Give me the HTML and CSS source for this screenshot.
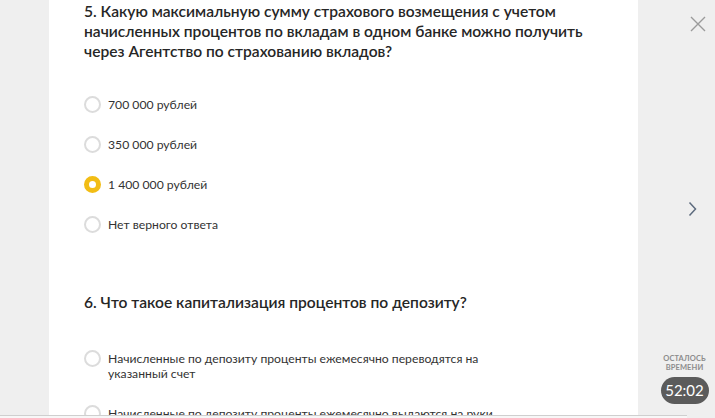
FILE: index.html
```html
<!DOCTYPE html>
<html lang="ru">
<head>
<meta charset="utf-8">
<title>Тест</title>
<link rel="stylesheet" href="styles.css">
</head>
<body>
<div class="page">
  <aside class="left-bar"></aside>
  <main class="panel">
    <section class="question">
      <h2 class="q-title">5. Какую максимальную сумму страхового возмещения с учетом начисленных процентов по вкладам в одном банке можно получить через Агентство по страхованию вкладов?</h2>
      <ul class="options">
        <li class="option"><span class="radio"></span><span class="opt-text">700 000 рублей</span></li>
        <li class="option"><span class="radio"></span><span class="opt-text">350 000 рублей</span></li>
        <li class="option"><span class="radio radio-checked"></span><span class="opt-text">1 400 000 рублей</span></li>
        <li class="option"><span class="radio"></span><span class="opt-text">Нет верного ответа</span></li>
      </ul>
    </section>
    <section class="question question-next">
      <h2 class="q-title">6. Что такое капитализация процентов по депозиту?</h2>
      <ul class="options options-spaced">
        <li class="option"><span class="radio"></span><span class="opt-text">Начисленные по депозиту проценты ежемесячно переводятся на указанный счет</span></li>
        <li class="option"><span class="radio"></span><span class="opt-text">Начисленные по депозиту проценты ежемесячно выдаются на руки</span></li>
      </ul>
    </section>
  </main>
  <aside class="right-bar">
    <button class="close-btn" aria-label="Закрыть">
      <svg width="16" height="16" viewBox="0 0 16 16"><path d="M1 1 L15 15 M15 1 L1 15" stroke="#9b9b9b" stroke-width="1.4" fill="none"/></svg>
    </button>
    <button class="next-btn" aria-label="Далее">
      <svg width="9" height="16" viewBox="0 0 9 16"><path d="M1.5 1.5 L7.5 8 L1.5 14.5" stroke="#5d6b7e" stroke-width="1.5" fill="none"/></svg>
    </button>
    <div class="timer">
      <div class="timer-label">ОСТАЛОСЬ<br>ВРЕМЕНИ</div>
      <div class="timer-badge">52:02</div>
    </div>
  </aside>
  <div class="hscroll"></div>
</div>
</body>
</html>
```

FILE: styles.css
```css
html, body {
  margin: 0;
  padding: 0;
  background: #efefef;
  font-family: "Lato", "Liberation Sans", sans-serif;
  overflow: hidden;
}

.page {
  position: relative;
  display: flex;
  width: 715px;
  height: 418px;
  overflow: hidden;
}

.left-bar {
  width: 49px;
  flex: none;
  background: #efefef;
}

.panel {
  width: 589px;
  flex: none;
  background: #ffffff;
  padding: 1px 40px 0 35px;
  box-sizing: border-box;
}

.q-title {
  margin: 0;
  font-size: 15.6px;
  line-height: 20px;
  font-weight: 600;
  color: #262626;
}

.question-next {
  margin-top: 47px;
}

.options {
  list-style: none;
  margin: 24px 0 0;
  padding: 0;
}

.options-spaced {
  margin-top: 27px;
}

.option {
  display: flex;
  align-items: flex-start;
  padding: 12px 0 13px;
}

.radio {
  flex: none;
  width: 17px;
  height: 17px;
  box-sizing: border-box;
  border: 2px solid #dcdcdc;
  border-radius: 50%;
  margin: -1px 7px -1px 0;
  background: #fff;
}

.radio-checked {
  border: 5.5px solid #f2bd15;
  background: #fff;
}

.opt-text {
  font-size: 12.2px;
  line-height: 15px;
  color: #333333;
  max-width: 390px;
}

.right-bar {
  width: 77px;
  flex: none;
  display: flex;
  flex-direction: column;
  align-items: flex-end;
  background: #efefef;
}

.close-btn, .next-btn {
  border: 0;
  padding: 0;
  background: none;
  display: block;
}

.close-btn {
  margin: 16px 9px 0 0;
  height: 16px;
}

.next-btn {
  margin: 169px 18px 0 0;
  height: 16px;
}

.timer {
  align-self: center;
  margin: 137px 0 0 16px;
  display: flex;
  flex-direction: column;
  align-items: center;
}

.timer-label {
  font-size: 7.5px;
  line-height: 9px;
  font-weight: 700;
  color: #8c8c8c;
  text-align: center;
  letter-spacing: 0.1px;
}

.timer-badge {
  margin-top: 5px;
  width: 48px;
  height: 27px;
  border-radius: 14px;
  background: #5b5b5b;
  color: #ffffff;
  font-size: 15px;
  line-height: 27px;
  text-align: center;
}

.hscroll {
  position: absolute;
  left: 0;
  top: 415px;
  width: 687px;
  height: 3px;
  box-sizing: border-box;
  border-top: 1px solid #cfcfcf;
  background: #f7f7f7;
}
```
